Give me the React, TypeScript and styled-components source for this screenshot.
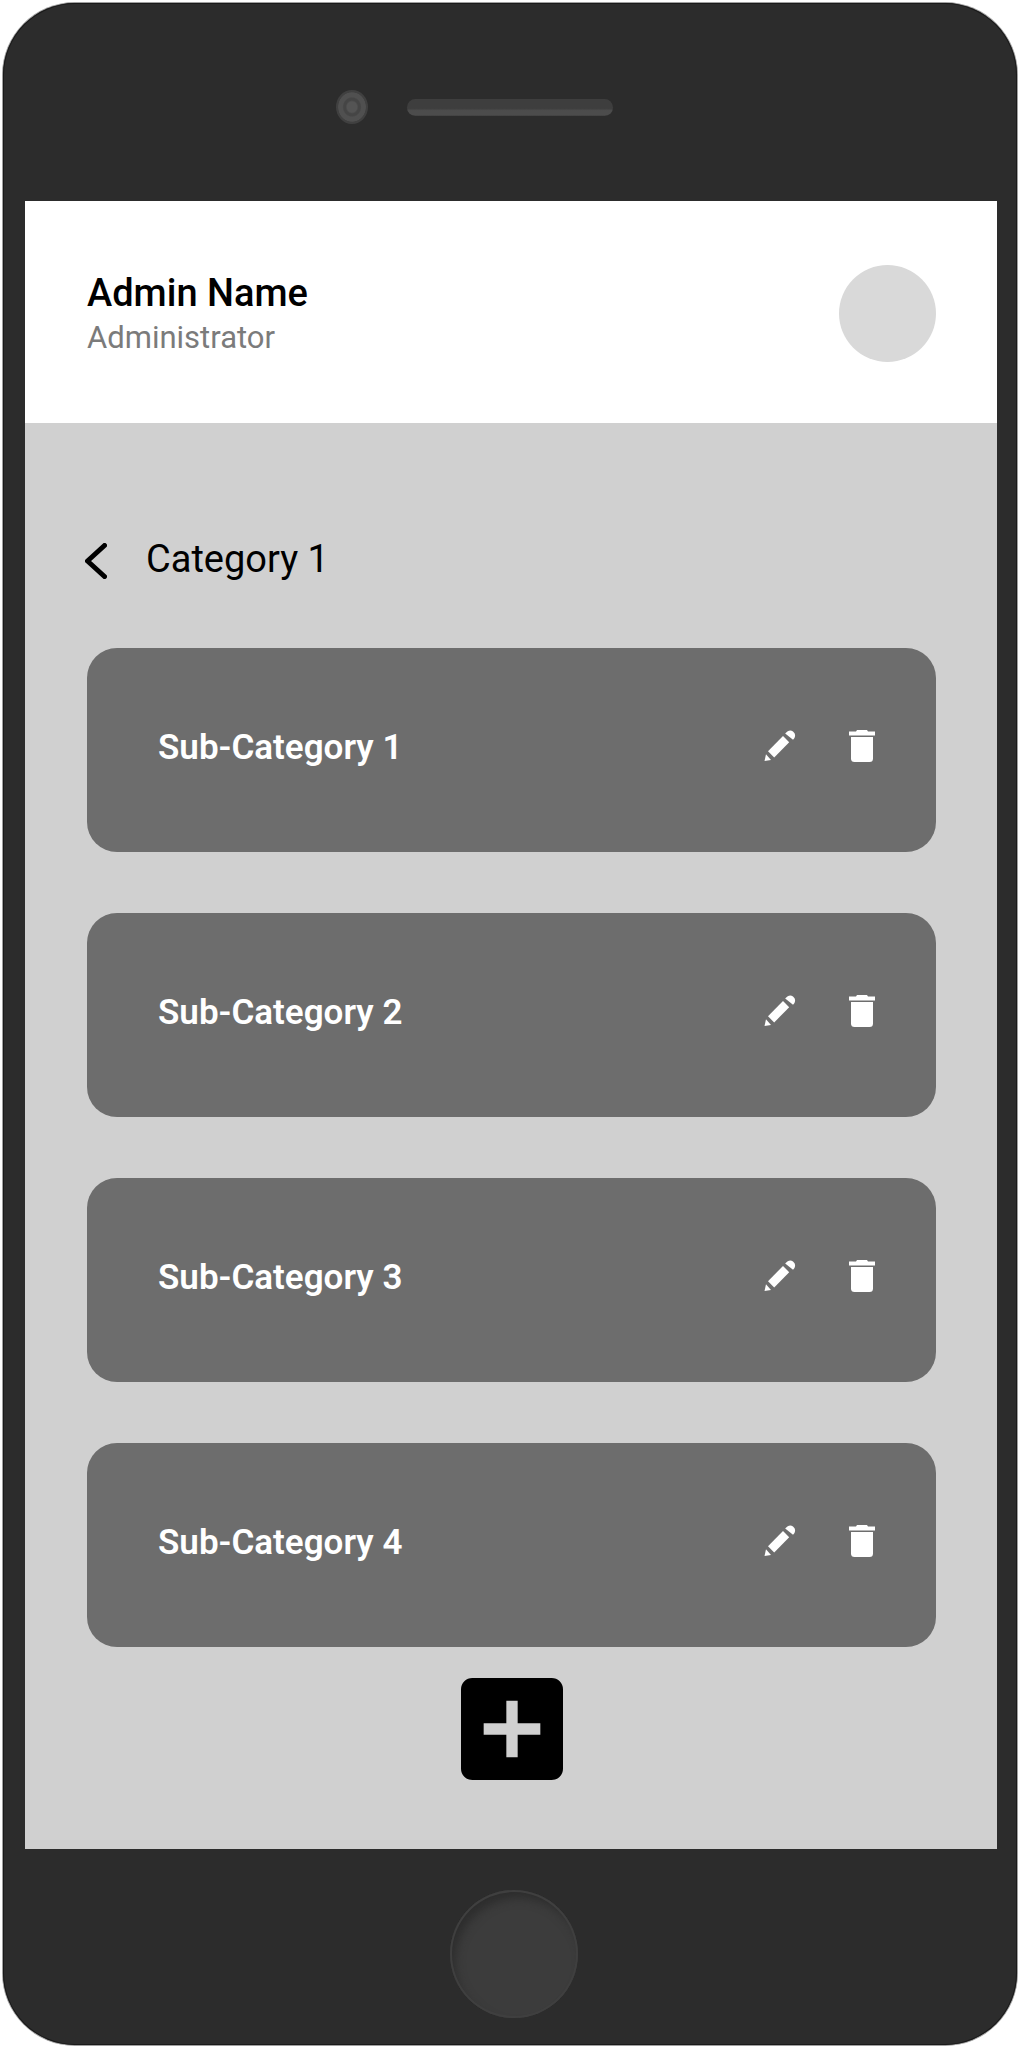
import React from "react";
import styled, { createGlobalStyle } from "styled-components";

const GlobalStyle = createGlobalStyle`
  *, *::before, *::after { box-sizing: border-box; }
  body { margin: 0; background: #ffffff; font-family: Roboto, "Liberation Sans", sans-serif; }
  h1, h2, p, ul { margin: 0; padding: 0; font-weight: 400; }
  button { border: 0; padding: 0; background: none; color: inherit; cursor: pointer; }
  svg { display: block; }
`;

const Page = styled.div`
  display: flex;
  min-height: 100vh;
  padding: 3px;
`;

const Phone = styled.div`
  flex: 1;
  display: flex;
  flex-direction: column;
  border-radius: 72px;
  background: #2c2c2c;
  box-shadow: 0 0 0 1px #a0a0a0, inset 0 0 0 1px #1a1a1a;
`;

const TopBezel = styled.div`
  display: grid;
  grid-template-columns: 1fr auto 1fr;
  align-items: center;
  column-gap: 39px;
  padding: 87px 0 77px;
`;

const Camera = styled.span`
  justify-self: end;
  width: 32px;
  height: 34px;
  border-radius: 50%;
  background: radial-gradient(closest-side, #545454 0 30%, #454545 40% 52%, #505050 60% 84%, #404040 88%);
`;

const Speaker = styled.span`
  width: 206px;
  height: 17px;
  border-radius: 9px;
  background: linear-gradient(#3e3e3e 0 55%, #4c4c4c 68% 92%, #404040);
`;

const Screen = styled.main`
  flex: 1;
  margin: 0 20px 0 22px;
  background: #d0d0d0;
`;

const Header = styled.header`
  display: flex;
  align-items: center;
  justify-content: space-between;
  padding: 64px 61px 61px 62px;
  background: #ffffff;
`;

const AdminName = styled.h1`
  font-size: 38px;
  line-height: 48px;
  font-weight: 500;
  color: #000000;
`;

const AdminRole = styled.p`
  font-size: 31px;
  line-height: 42px;
  color: #7b7b7b;
`;

const Avatar = styled.span`
  width: 97px;
  height: 97px;
  border-radius: 50%;
  background: #d9d9d9;
`;

const Content = styled.section`
  display: flex;
  flex-direction: column;
  padding: 112px 61px 68px 62px;
`;

const TitleBar = styled.div`
  display: flex;
  align-items: center;
  gap: 39px;
  margin: 0 0 65px -2px;
`;

const BackButton = styled.button`
  padding-top: 4px;
`;

const Title = styled.h2`
  font-size: 38px;
  line-height: 48px;
  color: #000000;
`;

const CardList = styled.ul`
  display: flex;
  flex-direction: column;
  gap: 61px;
  list-style: none;
`;

const Card = styled.li`
  display: flex;
  align-items: center;
  justify-content: space-between;
  height: 204px;
  padding: 0 61px 8px 71px;
  border-radius: 30px;
  background: #6d6d6d;
  color: #ffffff;
`;

const CardName = styled.span`
  font-size: 35px;
  line-height: 40px;
  font-weight: 600;
  padding-top: 4px;
`;

const Actions = styled.div`
  display: flex;
  gap: 53px;
`;

const AddButton = styled.button`
  align-self: center;
  margin-top: 31px;
  color: #000000;
`;

const BottomBezel = styled.div`
  display: flex;
  justify-content: center;
  padding: 41px 0 27px 8px;
`;

const HomeButton = styled.button`
  width: 128px;
  height: 128px;
  border-radius: 50%;
  background: #3c3c3c;
  box-shadow: inset 0 0 0 2px #3f3f3f, inset 5px 8px 10px #2d2d2d;
`;

const BackIcon = () => (
  <svg width="22" height="36" viewBox="0 0 22 36" fill="none" stroke="currentColor" strokeWidth="5" strokeLinecap="round" strokeLinejoin="round">
    <path d="M19.5 2.5 2.5 18 19.5 33.5" />
  </svg>
);

const PencilIcon = () => (
  <svg width="32" height="32" viewBox="0 0 32 32" fill="currentColor">
    <path d="M19 6 25.2 12.2 10.2 27.4 4 21.2Z" />
    <path d="M2 24.2 7 30 0.5 31Z" />
    <path d="M21.2 3.6C24 .2 26.6-.4 29 1.5c2.7 2.2 2.9 5.500 0 8.200Z" />
  </svg>
);

const TrashIcon = () => (
  <svg width="26" height="32" viewBox="0 0 26 32" fill="currentColor">
    <path d="M0 1.500H7L8 0H18L19 1.500H26V5.500H0Z" />
    <path d="M2 7H24V28.500Q24 32 20.500 32H5.500Q2 32 2 28.500Z" />
  </svg>
);

const AddBoxIcon = () => (
  <svg width="102" height="102" viewBox="3 3 18 18" fill="currentColor">
    <path d="M19 3H5a2 2 0 0 0-2 2v14a2 2 0 0 0 2 2h14a2 2 0 0 0 2-2V5a2 2 0 0 0-2-2zm-2 10h-4v4h-2v-4H7v-2h4V7h2v4h4v2z" />
  </svg>
);

const subCategories = ["Sub-Category 1", "Sub-Category 2", "Sub-Category 3", "Sub-Category 4"];

export default function App() {
  return (
    <>
      <GlobalStyle />
      <Page>
        <Phone>
          <TopBezel>
            <Camera />
            <Speaker />
          </TopBezel>
          <Screen>
            <Header>
              <div>
                <AdminName>Admin Name</AdminName>
                <AdminRole>Administrator</AdminRole>
              </div>
              <Avatar />
            </Header>
            <Content>
              <TitleBar>
                <BackButton type="button" aria-label="Back"><BackIcon /></BackButton>
                <Title>Category 1</Title>
              </TitleBar>
              <CardList>
                {subCategories.map((name) => (
                  <Card key={name}>
                    <CardName>{name}</CardName>
                    <Actions>
                      <button type="button" aria-label={`Edit ${name}`}><PencilIcon /></button>
                      <button type="button" aria-label={`Delete ${name}`}><TrashIcon /></button>
                    </Actions>
                  </Card>
                ))}
              </CardList>
              <AddButton type="button" aria-label="Add sub-category"><AddBoxIcon /></AddButton>
            </Content>
          </Screen>
          <BottomBezel>
            <HomeButton type="button" aria-label="Home" />
          </BottomBezel>
        </Phone>
      </Page>
    </>
  );
}
